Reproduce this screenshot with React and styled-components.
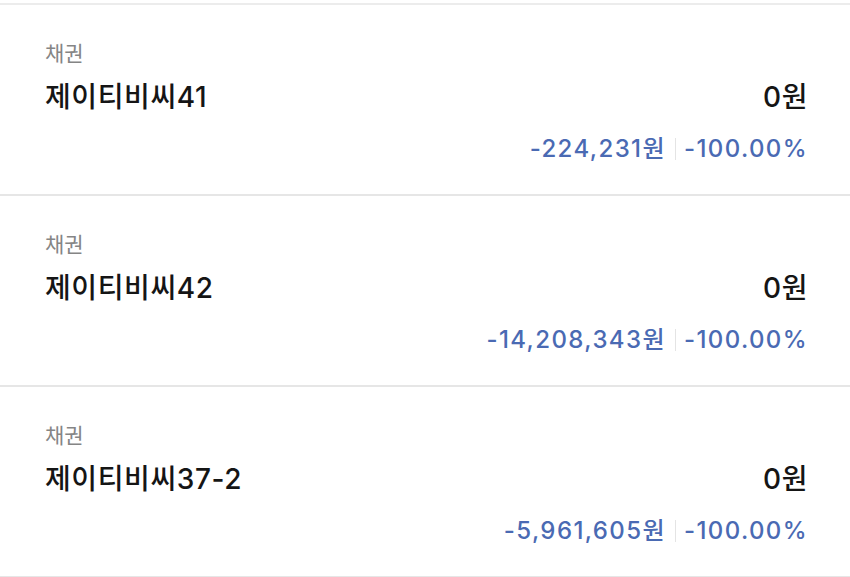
import React from 'react';
import styled, { createGlobalStyle } from 'styled-components';

const GlobalStyle = createGlobalStyle`
  html, body {
    margin: 0;
    padding: 0;
    background: #fff;
  }
  body {
    font-family: Inter, "Noto Sans CJK KR", sans-serif;
  }
`;

const List = styled.div`
  padding-top: 3px;
`;

const Item = styled.div`
  border-top: ${({ first }) => (first ? '2px solid #ececec' : '0')};
  border-bottom: 2px solid #e6e6e6;
  padding: 35px 42px 29px 45px;
`;

const Kind = styled.div`
  font-size: 21px;
  line-height: 28px;
  color: #858585;
`;

const Row = styled.div`
  display: flex;
  justify-content: space-between;
  align-items: center;
  margin-top: 13px;
  font-size: 28px;
  font-weight: 500;
  letter-spacing: 0.6px;
  line-height: 32px;
  color: #151515;
`;

const Change = styled.div`
  display: flex;
  justify-content: flex-end;
  align-items: center;
  margin-top: 20px;
  font-size: 24px;
  font-weight: 500;
  letter-spacing: 1.4px;
  line-height: 32px;
  color: #4a6ab3;
`;

const Divider = styled.span`
  width: 1px;
  height: 22px;
  background: #e4e4e4;
  margin: 0 8px 0 9px;
`;

const items = [
  { name: '제이티비씨41', amount: '0원', diff: '-224,231원', rate: '-100.00%' },
  { name: '제이티비씨42', amount: '0원', diff: '-14,208,343원', rate: '-100.00%' },
  { name: '제이티비씨37-2', amount: '0원', diff: '-5,961,605원', rate: '-100.00%' },
];

export default function App() {
  return (
    <>
      <GlobalStyle />
      <List>
        {items.map((it, i) => (
          <Item key={it.name} first={i === 0}>
            <Kind>채권</Kind>
            <Row>
              <span>{it.name}</span>
              <span>{it.amount}</span>
            </Row>
            <Change>
              <span>{it.diff}</span>
              <Divider />
              <span>{it.rate}</span>
            </Change>
          </Item>
        ))}
      </List>
    </>
  );
}
